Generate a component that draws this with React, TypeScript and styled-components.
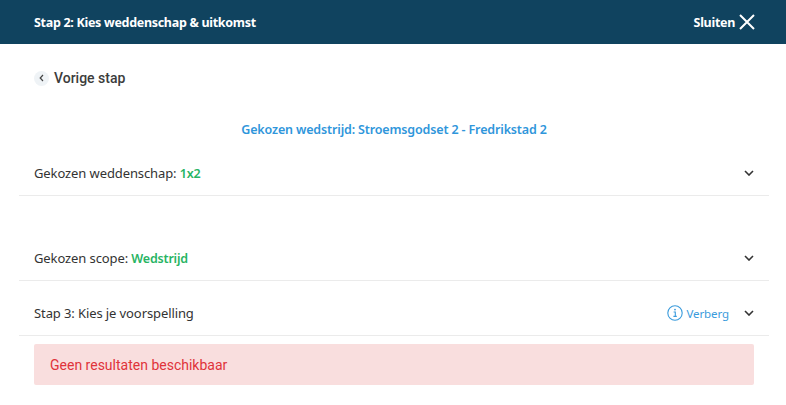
import { createGlobalStyle } from 'styled-components';
import styled from 'styled-components';

const GlobalStyle = createGlobalStyle`
  html, body {
    margin: 0;
    padding: 0;
    background: #fff;
    font-family: "Noto Sans", "Open Sans", sans-serif;
  }
`;

const Page = styled.div`
  width: 786px;
  height: 405px;
  overflow: hidden;
  background: #fff;
`;

const Header = styled.header`
  height: 44px;
  background: #10435f;
  color: #fff;
  display: flex;
  align-items: center;
  justify-content: space-between;
  padding: 0 30px 0 34px;
  font-size: 12.5px;
  font-weight: 700;
  letter-spacing: -0.3px;
`;

const CloseButton = styled.div`
  display: flex;
  align-items: center;
  gap: 3px;
`;

const Body = styled.main`
  padding: 0 17px 0 19px;
`;

const BackLink = styled.div`
  display: flex;
  align-items: center;
  gap: 5px;
  height: 20px;
  margin: 24px 0 0 15px;
  font-family: Roboto, sans-serif;
  font-size: 14px;
  font-weight: 500;
  color: #3c3c3c;
`;

const BackCircle = styled.span`
  width: 15px;
  height: 15px;
  border-radius: 50%;
  background: #eff3f6;
  display: flex;
  align-items: center;
  justify-content: center;
`;

const Chosen = styled.div`
  margin-top: 32px;
  height: 20px;
  line-height: 20px;
  text-align: center;
  color: #2f96db;
  font-size: 12.5px;
  font-weight: 600;
  letter-spacing: -0.15px;
`;

const Row = styled.div<{ $gap?: number }>`
  height: 44px;
  margin-top: ${({ $gap }) => $gap ?? 0}px;
  display: flex;
  align-items: center;
  justify-content: space-between;
  padding: 0 15px;
  border-bottom: 1px solid #ebebeb;
  font-size: 13px;
  letter-spacing: -0.1px;
  color: #333;
`;

const Accent = styled.span`
  color: #27b463;
  font-weight: 600;
  font-size: 12.5px;
  letter-spacing: -0.2px;
`;

const RowActions = styled.div`
  display: flex;
  align-items: center;
  gap: 15px;
`;

const Hint = styled.span`
  display: flex;
  align-items: center;
  gap: 4px;
  color: #3a9bdc;
  font-size: 11.5px;
  letter-spacing: -0.1px;
`;

const Alert = styled.div`
  height: 41px;
  margin: 8px 15px 0;
  padding-left: 16px;
  display: flex;
  align-items: center;
  background: #f9dede;
  border-radius: 2px;
  color: #e0333a;
  font-family: Roboto, sans-serif;
  font-size: 14px;
`;

const Chevron = () => (
  <svg width="10" height="6" viewBox="0 0 10 6" fill="none">
    <path d="M1 1l4 4 4-4" stroke="#333" strokeWidth="1.6" />
  </svg>
);

const App = () => {
  return (
    <Page>
      <GlobalStyle />
      <Header>
        <span>Stap 2: Kies weddenschap &amp; uitkomst</span>
        <CloseButton>
          Sluiten
          <svg width="18" height="18" viewBox="0 0 18 18" fill="none">
            <path d="M2 2l14 14M16 2L2 16" stroke="#fff" strokeWidth="2" />
          </svg>
        </CloseButton>
      </Header>
      <Body>
        <BackLink>
          <BackCircle>
            <svg width="5" height="8" viewBox="0 0 5 8" fill="none">
              <path d="M4 1L1.2 4 4 7" stroke="#444" strokeWidth="1.2" />
            </svg>
          </BackCircle>
          Vorige stap
        </BackLink>
        <Chosen>Gekozen wedstrijd: Stroemsgodset 2 - Fredrikstad 2</Chosen>
        <Row $gap={11}>
          <span>
            Gekozen weddenschap: <Accent>1x2</Accent>
          </span>
          <Chevron />
        </Row>
        <Row $gap={40}>
          <span>
            Gekozen scope: <Accent>Wedstrijd</Accent>
          </span>
          <Chevron />
        </Row>
        <Row $gap={10}>
          <span>Stap 3: Kies je voorspelling</span>
          <RowActions>
            <Hint>
              <svg width="16" height="16" viewBox="0 0 16 16" fill="none">
                <circle cx="8" cy="8" r="7.2" stroke="#3a9bdc" strokeWidth="1.1" />
                <path d="M6.6 7h1.7v4.2M6.4 11.4h3.4" stroke="#3a9bdc" strokeWidth="1.1" />
                <circle cx="8" cy="4.6" r="0.9" fill="#3a9bdc" />
              </svg>
              Verberg
            </Hint>
            <Chevron />
          </RowActions>
        </Row>
        <Alert>Geen resultaten beschikbaar</Alert>
      </Body>
    </Page>
  );
};

export default App;
